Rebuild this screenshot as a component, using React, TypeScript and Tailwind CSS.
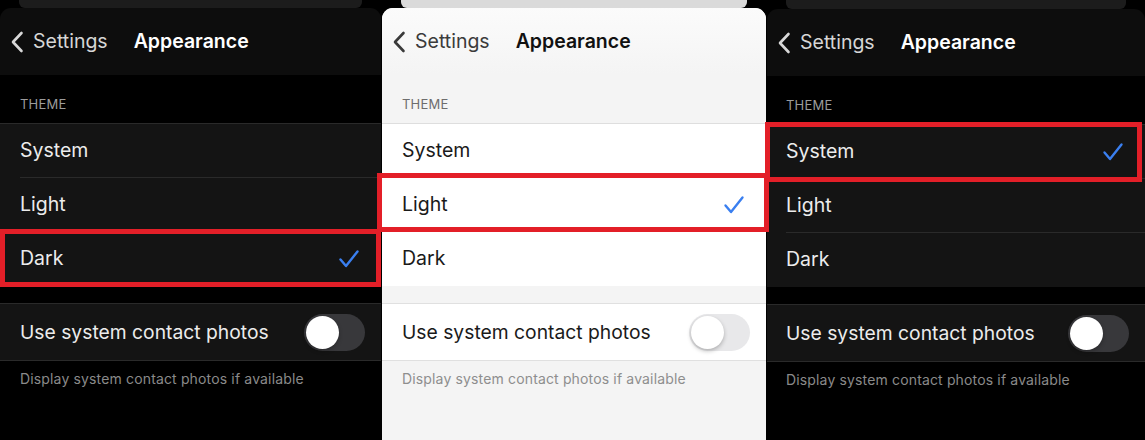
import React from "react";

type Theme = "dark" | "light";

function Chevron({ color }: { color: string }) {
  return (
    <svg width="14" height="22" viewBox="0 0 14 22" fill="none">
      <path d="M11.5 2 L3 11 L11.5 20" stroke={color} strokeWidth="2.6" strokeLinecap="round" strokeLinejoin="round" />
    </svg>
  );
}

function Check() {
  return (
    <svg width="22" height="20" viewBox="0 0 22 20" fill="none">
      <path d="M2.5 10.5 L8 17 L19.5 2.5" stroke="#3a7ff0" strokeWidth="2.4" strokeLinecap="round" strokeLinejoin="round" />
    </svg>
  );
}

function Panel({
  theme,
  selected,
  width,
  top,
  pad,
}: {
  theme: Theme;
  selected: string;
  width: string;
  top: string;
  pad: string;
}) {
  const dark = theme === "dark";
  const options = ["System", "Light", "Dark"];
  return (
    <div className={`${width} flex flex-col shrink-0`}>
      <div className={`${top} flex justify-center`}>
        <div
          className={`w-[90%] h-full rounded-b-[6px] ${dark ? "bg-[#1c1c1c]" : "bg-[#dadada]"}`}
        />
      </div>
      <div
        className={`flex-1 rounded-t-[11px] overflow-hidden flex flex-col ${
          dark ? "bg-black" : "bg-[#f4f4f4]"
        }`}
      >
        <div
          className={`h-[67px] flex items-center pl-[10px] ${
            dark ? "bg-[#0d0d0d]" : "bg-gradient-to-b from-[#fbfbfb] to-[#f4f4f4]"
          }`}
        >
          <Chevron color={dark ? "#d8d8d8" : "#3a3a3a"} />
          <span
            className={`ml-[9px] text-[19.5px] ${dark ? "text-[#d6d6d6]" : "text-[#3b3b3b]"}`}
          >
            Settings
          </span>
          <span
            className={`ml-[26px] text-[19.5px] font-semibold ${dark ? "text-white" : "text-[#111]"}`}
          >
            Appearance
          </span>
        </div>
        <div className={`h-[48px] flex items-end ${pad} pb-[11px]`}>
          <span
            className={`text-[13px] leading-[16px] tracking-[0.2px] ${
              dark ? "text-[#9c9c9c]" : "text-[#6d6d6d]"
            }`}
          >
            THEME
          </span>
        </div>
        <div
          className={`border-t ${dark ? "bg-[#141414] border-[#2a2a2a]" : "bg-white border-[#dedede]"}`}
        >
          {options.map((o, i) => (
            <div key={o} className={pad}>
              <div
                className={`h-[54px] flex items-center justify-between pr-[21px] ${
                  i < 2 ? (dark ? "border-b border-[#2a2a2a]" : "border-b border-[#e2e2e2]") : ""
                }`}
              >
                <span className={`text-[19.5px] ${dark ? "text-[#ececec]" : "text-[#1a1a1a]"}`}>{o}</span>
                {selected === o && <Check />}
              </div>
            </div>
          ))}
        </div>
        <div className="h-[17px]" />
        <div
          className={`h-[58px] flex items-center justify-between ${pad} pr-[16px] border-y ${
            dark ? "bg-[#141414] border-[#2a2a2a]" : "bg-white border-[#e0e0e0]"
          }`}
        >
          <span className={`text-[19.3px] ${dark ? "text-[#ececec]" : "text-[#1a1a1a]"}`}>
            Use system contact photos
          </span>
          <div
            className={`w-[61px] h-[37px] rounded-full p-[2px] flex items-center ${
              dark ? "bg-[#38383b]" : "bg-[#e8e8ea]"
            }`}
          >
            <div className="w-[33px] h-[33px] rounded-full bg-white shadow-[0_2px_4px_rgba(0,0,0,0.25)]" />
          </div>
        </div>
        <div className={`${pad} pt-[5px]`}>
          <span
            className={`text-[14px] tracking-[0.15px] ${dark ? "text-[#8a8a8a]" : "text-[#8e8e8e]"}`}
          >
            Display system contact photos if available
          </span>
        </div>
      </div>
    </div>
  );
}

export default function App() {
  return (
    <div
      className="relative w-[1145px] h-[440px] bg-black overflow-hidden flex"
      style={{ fontFamily: "Inter, 'Noto Sans', sans-serif" }}
    >
      <Panel theme="dark" selected="Dark" width="w-[381px]" top="h-[8px]" pad="pl-[20px]" />
      <div className="w-[1px] shrink-0" />
      <Panel theme="light" selected="Light" width="w-[384px]" top="h-[8px]" pad="pl-[20px]" />
      <div className="w-[1px] shrink-0" />
      <Panel theme="dark" selected="System" width="w-[378px]" top="h-[9px]" pad="pl-[19px]" />

      <div className="absolute left-[0px] top-[229px] w-[381px] h-[58px] border-[5px] border-[#e31f28]" />
      <div className="absolute left-[377px] top-[173px] w-[392px] h-[59px] border-[5px] border-[#e31f28]" />
      <div className="absolute left-[765px] top-[122px] w-[377px] h-[60px] border-[5px] border-[#e31f28]" />
    </div>
  );
}
